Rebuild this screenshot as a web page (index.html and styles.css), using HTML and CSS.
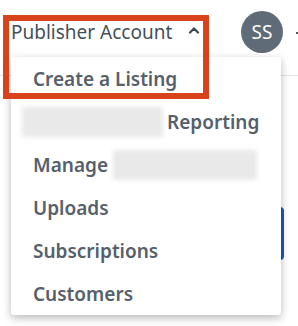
FILE: index.html
```
<!DOCTYPE html>
<html lang="en">
<head>
    <meta charset="UTF-8">
    <meta name="viewport" content="width=device-width, initial-scale=1.0">
    <title>Publisher Account</title>
    <link rel="stylesheet" href="styles.css">
</head>
<body>
    <header class="topbar">
        <div class="account-toggle">
            <span>Publisher Account</span>
            <svg class="chevron" width="12" height="8" viewBox="0 0 12 8">
                <path d="M2 6.5 L6 2.5 L10 6.5" fill="none" stroke="#3c4650" stroke-width="2.2" stroke-linecap="round" stroke-linejoin="round"/>
            </svg>
        </div>
        <div class="avatar">SS</div>
        <span class="avatar-caret"></span>
    </header>

    <main class="page">
        <button class="primary-btn">Publish</button>
    </main>

    <!-- open dropdown menu -->
    <ul class="dropdown">
        <li class="menu-item">Create a Listing</li>
        <li class="menu-item"><span class="redacted redacted-lead"></span>Reporting</li>
        <li class="menu-item">Manage<span class="redacted redacted-tail"></span></li>
        <li class="menu-item">Uploads</li>
        <li class="menu-item">Subscriptions</li>
        <li class="menu-item">Customers</li>
    </ul>

    <!-- annotation box -->
    <div class="highlight"></div>
</body>
</html>
```

FILE: styles.css
```
body {
    margin: 0;
    font-family: "Noto Sans", "Open Sans", sans-serif;
    background: #fff;
    width: 298px;
    height: 326px;
    overflow: hidden;
    position: relative;
}
.topbar {
    height: 76px;
    box-sizing: border-box;
    border-bottom: 1px solid #e2e4e6;
    display: flex;
    align-items: flex-start;
    padding: 11px 0 0 11px;
}
.account-toggle {
    display: flex;
    align-items: center;
    gap: 16px;
    height: 42px;
    font-size: 19px;
    color: #46505a;
}
.chevron {
    margin-top: -4px;
}
.avatar {
    width: 42px;
    height: 42px;
    border-radius: 50%;
    background: #5f6b77;
    color: #fff;
    font-size: 19px;
    display: flex;
    align-items: center;
    justify-content: center;
    margin-left: auto;
}
.avatar-caret {
    width: 4px;
    height: 2px;
    background: #555;
    margin: 21px -2px 0 13px;
}
.page {
    padding-top: 131px;
}
.primary-btn {
    display: block;
    margin-left: 184px;
    width: 100px;
    height: 53px;
    border: none;
    border-radius: 4px;
    background: #1a5bb8;
    color: #fff;
}
.dropdown {
    position: absolute;
    left: 11px;
    top: 57px;
    width: 270px;
    margin: 0;
    padding: 0;
    list-style: none;
    background: #fff;
    border-radius: 3px;
    box-shadow: 0 3px 9px rgba(0,0,0,0.28);
}
.menu-item {
    display: flex;
    align-items: center;
    height: 43px;
    padding-left: 22px;
    font-size: 19px;
    font-weight: 600;
    color: #56606b;
}
.redacted {
    display: inline-block;
    height: 30px;
    background: #e9e9ea;
    filter: blur(2px);
}
.redacted-lead {
    width: 141px;
    margin: 0 4px 0 -11px;
}
.redacted-tail {
    width: 144px;
    margin-left: 5px;
}
.highlight {
    position: absolute;
    left: 3px;
    top: 15px;
    width: 206px;
    height: 84px;
    box-sizing: border-box;
    border: 6px solid #d8431b;
}
```
